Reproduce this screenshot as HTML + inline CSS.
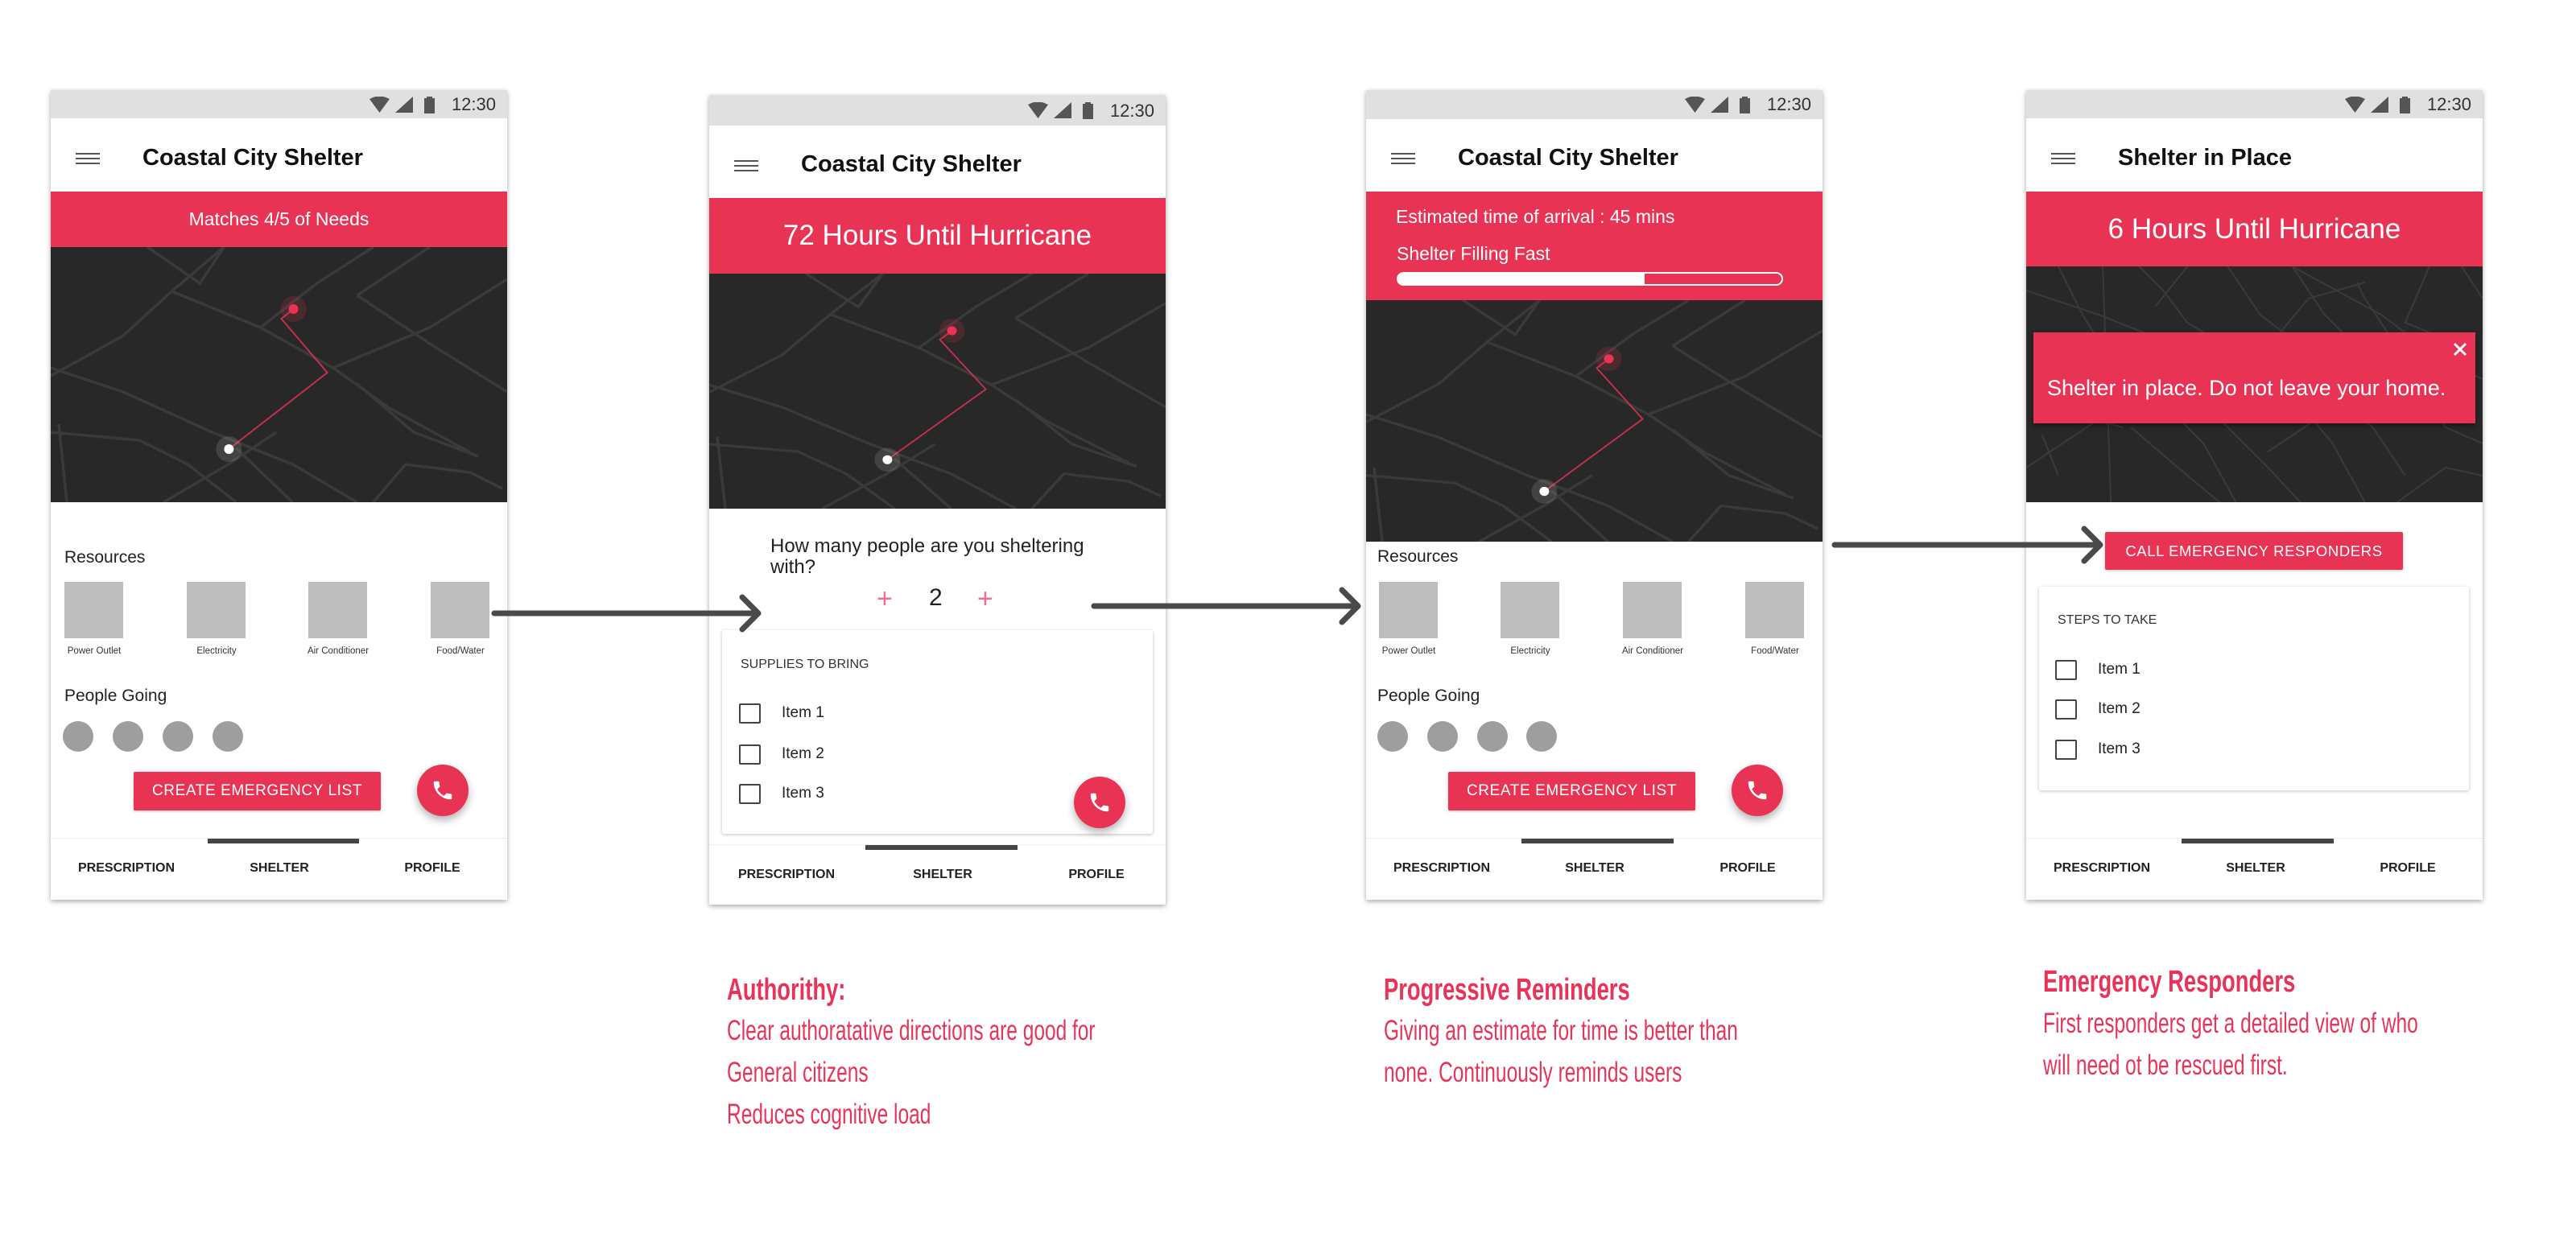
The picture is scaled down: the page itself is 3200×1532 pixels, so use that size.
<!DOCTYPE html>
<html><head><meta charset="utf-8">
<style>
*{margin:0;padding:0;box-sizing:border-box}
body{width:3200px;height:1532px;background:#fff;position:relative;overflow:hidden;font-family:"Liberation Sans",Arial,sans-serif;color:#222}
.ph{position:absolute;width:567px;height:1006px;background:#fff;box-shadow:0 2px 6px rgba(0,0,0,.35);overflow:hidden}
.ab{position:absolute}
.sb{position:absolute;left:0;top:0;width:100%;height:35px;background:#e0e0e0}
.time{position:absolute;right:14px;top:5px;font-size:22px;color:#333}
.ham{position:absolute;left:31px;width:30px;height:14px;border-top:2.5px solid #555;border-bottom:2.5px solid #555}
.ham:after{content:"";position:absolute;left:0;right:0;top:3.5px;border-top:2.5px solid #555}
.title{position:absolute;left:114px;font-size:29px;font-weight:bold;color:#111}
.red{position:absolute;left:0;width:100%;background:#e93354;color:#fff}
.map{position:absolute;left:0;width:100%;background:#282828}
.map svg{display:block;width:100%;height:100%}
.lbl{font-size:21px;color:#222}
.sq{position:absolute;width:73px;height:70px;background:#bdbdbd}
.sql{position:absolute;width:110px;text-align:center;font-size:11.5px;color:#333}
.cir{position:absolute;width:38px;height:38px;border-radius:50%;background:#9e9e9e}
.btn{position:absolute;background:#e93354;color:#fff;font-size:19px;text-align:center;letter-spacing:.6px;border-radius:2px;box-shadow:0 1px 3px rgba(0,0,0,.25)}
.fab{position:absolute;width:64px;height:64px;border-radius:50%;background:#e93354;box-shadow:0 5px 10px rgba(0,0,0,.3)}
.fab svg{position:absolute;left:17px;top:17px;width:30px;height:30px}
.nav{position:absolute;left:0;width:100%;height:80px;border-top:1px solid #eee}
.nav span{position:absolute;font-size:16px;font-weight:bold;color:#222;transform:translateX(-50%)}
.ind{position:absolute;top:0;height:6px;background:#444}
.card{position:absolute;background:#fff;box-shadow:0 1px 4px rgba(0,0,0,.25);border-radius:3px}
.cb{position:absolute;width:27px;height:25px;border:2.5px solid #444;border-radius:2px}
.it{position:absolute;font-size:19px;color:#222}
.cap{position:absolute;color:#e8345a;transform-origin:0 0;white-space:nowrap}
.h{font-size:38px;font-weight:bold;transform:scaleX(.72)}
.t{font-size:35px;transform:scaleX(.7)}
</style></head><body>

<svg width="0" height="0" style="position:absolute">
<defs>
<symbol id="mapA" viewBox="0 0 566 317" preserveAspectRatio="none">
<g stroke="#3a3a3a" stroke-width="3.5" fill="none">
<path d="M120,0 L185,45 L215,0"/><path d="M215,0 L150,55 L90,110 L0,160"/>
<path d="M0,150 L90,180 L200,230 L300,270 L380,317"/>
<path d="M150,55 L260,100 L350,150 L420,200 L520,255"/>
<path d="M260,100 L330,45 L400,0"/>
<path d="M380,60 L470,120 L566,180"/>
<path d="M350,150 L470,100 L566,40"/><path d="M470,0 L380,60"/>
<path d="M380,170 L450,230 L530,260"/>
<path d="M0,230 L110,240 L170,270 L230,317"/><path d="M10,220 L20,317"/>
<path d="M140,317 L220,270 L280,230"/><path d="M230,250 L300,317"/>
<path d="M400,317 L440,270 L520,280 L560,300"/>
</g>
<path d="M221,251 L343,156 L286,89 L301,77" stroke="#e93354" stroke-width="2" fill="none" opacity=".8"/>
<circle cx="301" cy="77" r="16" fill="#e93354" opacity=".18"/>
<circle cx="301" cy="77" r="6" fill="#e93354"/>
<circle cx="221" cy="251" r="16" fill="#fff" opacity=".12"/>
<circle cx="221" cy="251" r="6" fill="#fff"/>
</symbol>
<symbol id="mapB" viewBox="0 0 566 293" preserveAspectRatio="none">
<g stroke="#3a3a3a" stroke-width="2" fill="none">
<path d="M0,30 L90,60 L190,100"/><path d="M40,0 L70,60 L100,110"/><path d="M95,0 L105,293"/>
<path d="M140,0 L170,30 L200,70 L250,100"/><path d="M200,0 L160,50"/><path d="M250,0 L290,60 L330,90"/>
<path d="M330,0 L370,60 L420,110"/><path d="M300,100 L350,40 L420,20"/><path d="M330,0 L440,60 L520,120 L566,140"/>
<path d="M410,20 L420,40 L460,100"/><path d="M500,0 L470,70 L520,90"/><path d="M540,0 L566,40"/>
<path d="M0,250 L60,210 L120,170"/><path d="M20,210 L40,260"/><path d="M130,200 L200,260 L240,293"/>
<path d="M160,160 L220,220 L260,293"/><path d="M240,190 L300,250 L340,293"/><path d="M300,230 L360,190"/>
<path d="M330,160 L380,220 L420,293"/><path d="M380,160 L430,200 L470,260"/><path d="M430,180 L480,140 L520,200 L566,220"/>
<path d="M460,293 L520,250 L566,260"/><path d="M80,190 L120,200"/></g>
</symbol>
<symbol id="phone" viewBox="0 0 24 24"><path fill="#fff" d="M6.62 10.790c1.44 2.83 3.76 5.14 6.59 6.59l2.2-2.2c.27-.27.67-.36 1.020-.24 1.12.37 2.33.57 3.570.57.55 0 1 .45 1 1V20c0 .55-.45 1-1 1-9.39 0-17-7.61-17-17 0-.55.45-1 1-1h3.5c.55 0 1 .45 1 1 0 1.25.2 2.45.57 3.57.11.35.03.74-.25 1.02l-2.2 2.2z"/></symbol>
<symbol id="stat" viewBox="0 0 90 22"><path d="M0,3 Q12,-4 25,3 L12.5,20 Z" fill="#555"/><path d="M32,20 L54,0 L54,20 Z" fill="#555"/><rect x="68" y="2" width="13" height="19" fill="#555"/><rect x="71" y="0" width="7" height="3" fill="#555"/></symbol>
</defs></svg>

<!-- PHONE 1 -->
<div class="ph" style="left:63px;top:112px">
 <div class="sb"><svg class="ab" style="right:81px;top:8px;width:90px;height:22px"><use href="#stat"/></svg><div class="time">12:30</div></div>
 <div class="ham" style="top:78px"></div>
 <div class="title" style="top:68px">Coastal City Shelter</div>
 <div class="red" style="top:126px;height:69px;font-size:23px;text-align:center;line-height:69px">Matches 4/5 of Needs</div>
 <div class="map" style="top:195px;height:317px"><svg><use href="#mapA"/></svg></div>
 <div class="ab lbl" style="left:17px;top:569px">Resources</div>
 <div class="sq" style="left:17px;top:611px"></div><div class="sq" style="left:169px;top:611px"></div><div class="sq" style="left:320px;top:611px"></div><div class="sq" style="left:472px;top:611px"></div>
 <div class="sql" style="left:-1px;top:691px">Power Outlet</div><div class="sql" style="left:151px;top:691px">Electricity</div><div class="sql" style="left:302px;top:691px">Air Conditioner</div><div class="sql" style="left:454px;top:691px">Food/Water</div>
 <div class="ab lbl" style="left:17px;top:741px">People Going</div>
 <div class="cir" style="left:15px;top:784px"></div><div class="cir" style="left:77px;top:784px"></div><div class="cir" style="left:139px;top:784px"></div><div class="cir" style="left:201px;top:784px"></div>
 <div class="btn" style="left:103px;top:847px;width:307px;height:48px;line-height:48px">CREATE EMERGENCY LIST</div>
 <div class="fab" style="left:455px;top:838px"><svg><use href="#phone"/></svg></div>
 <div class="nav" style="top:929px"><div class="ind" style="left:195px;width:188px"></div><span style="left:94px;top:28px">PRESCRIPTION</span><span style="left:284px;top:28px">SHELTER</span><span style="left:474px;top:28px">PROFILE</span></div>
</div>

<!-- PHONE 2 -->
<div class="ph" style="left:881px;top:118px">
 <div class="sb" style="height:38px"><svg class="ab" style="right:81px;top:9px;width:90px;height:22px"><use href="#stat"/></svg><div class="time" style="top:7px">12:30</div></div>
 <div class="ham" style="top:81px"></div>
 <div class="title" style="top:70px">Coastal City Shelter</div>
 <div class="red" style="top:128px;height:94px;font-size:35px;text-align:center;line-height:94px">72 Hours Until Hurricane</div>
 <div class="map" style="top:222px;height:292px"><svg><use href="#mapA"/></svg></div>
 <div class="ab" style="left:76px;top:548px;font-size:24px;line-height:26px;color:#222">How many people are you sheltering<br>with?</div>
 <div class="ab" style="left:208px;top:607px;font-size:34px;color:#f0708e;font-weight:300">+</div>
 <div class="ab" style="left:273px;top:608px;font-size:30px;color:#222">2</div>
 <div class="ab" style="left:333px;top:607px;font-size:34px;color:#f0708e">+</div>
 <div class="card" style="left:16px;top:665px;width:535px;height:253px">
  <div class="ab" style="left:23px;top:34px;font-size:16px;color:#333">SUPPLIES TO BRING</div>
  <div class="cb" style="left:21px;top:91px"></div><div class="it" style="left:74px;top:92px">Item 1</div>
  <div class="cb" style="left:21px;top:142px"></div><div class="it" style="left:74px;top:143px">Item 2</div>
  <div class="cb" style="left:21px;top:191px"></div><div class="it" style="left:74px;top:192px">Item 3</div>
 </div>
 <div class="fab" style="left:453px;top:847px"><svg><use href="#phone"/></svg></div>
 <div class="nav" style="top:931px"><div class="ind" style="left:194px;width:189px"></div><span style="left:96px;top:28px">PRESCRIPTION</span><span style="left:290px;top:28px">SHELTER</span><span style="left:481px;top:28px">PROFILE</span></div>
</div>

<!-- PHONE 3 -->
<div class="ph" style="left:1697px;top:112px">
 <div class="sb" style="height:36px"><svg class="ab" style="right:81px;top:8px;width:90px;height:22px"><use href="#stat"/></svg><div class="time">12:30</div></div>
 <div class="ham" style="top:78px"></div>
 <div class="title" style="top:68px">Coastal City Shelter</div>
 <div class="red" style="top:126px;height:135px">
  <div class="ab" style="left:37px;top:18px;font-size:23px">Estimated time of arrival : 45 mins</div>
  <div class="ab" style="left:38px;top:64px;font-size:23px">Shelter Filling Fast</div>
  <div class="ab" style="left:38px;top:100px;width:480px;height:17px;border:2.5px solid #fff;border-radius:9px;overflow:hidden"><div style="width:306px;height:100%;background:#fff"></div></div>
 </div>
 <div class="map" style="top:261px;height:300px"><svg><use href="#mapA"/></svg></div>
 <div class="ab lbl" style="left:14px;top:568px">Resources</div>
 <div class="sq" style="left:16px;top:611px"></div><div class="sq" style="left:167px;top:611px"></div><div class="sq" style="left:319px;top:611px"></div><div class="sq" style="left:471px;top:611px"></div>
 <div class="sql" style="left:-2px;top:691px">Power Outlet</div><div class="sql" style="left:149px;top:691px">Electricity</div><div class="sql" style="left:301px;top:691px">Air Conditioner</div><div class="sql" style="left:453px;top:691px">Food/Water</div>
 <div class="ab lbl" style="left:14px;top:741px">People Going</div>
 <div class="cir" style="left:14px;top:784px"></div><div class="cir" style="left:76px;top:784px"></div><div class="cir" style="left:138px;top:784px"></div><div class="cir" style="left:199px;top:784px"></div>
 <div class="btn" style="left:102px;top:847px;width:307px;height:48px;line-height:48px">CREATE EMERGENCY LIST</div>
 <div class="fab" style="left:454px;top:838px"><svg><use href="#phone"/></svg></div>
 <div class="nav" style="top:929px"><div class="ind" style="left:193px;width:189px"></div><span style="left:94px;top:28px">PRESCRIPTION</span><span style="left:284px;top:28px">SHELTER</span><span style="left:474px;top:28px">PROFILE</span></div>
</div>

<!-- PHONE 4 -->
<div class="ph" style="left:2517px;top:112px">
 <div class="sb"><svg class="ab" style="right:81px;top:8px;width:90px;height:22px"><use href="#stat"/></svg><div class="time">12:30</div></div>
 <div class="ham" style="top:78px"></div>
 <div class="title" style="top:68px">Shelter in Place</div>
 <div class="red" style="top:126px;height:93px;font-size:35px;text-align:center;line-height:93px">6 Hours Until Hurricane</div>
 <div class="map" style="top:219px;height:293px"><svg><use href="#mapB"/></svg></div>
 <div class="ab" style="left:9px;top:301px;width:549px;height:113px;background:#e93354;box-shadow:0 3px 6px rgba(0,0,0,.4)">
  <div class="ab" style="left:17px;top:54px;font-size:27px;color:#fff;white-space:nowrap">Shelter in place. Do not leave your home.</div>
  <svg class="ab" style="right:10px;top:12px;width:18px;height:18px" viewBox="0 0 18 18"><path d="M2,2 L16,16 M16,2 L2,16" stroke="#fff" stroke-width="3"/></svg>
 </div>
 <div class="btn" style="left:98px;top:549px;width:370px;height:47px;line-height:47px;font-size:18.5px">CALL EMERGENCY RESPONDERS</div>
 <div class="card" style="left:16px;top:617px;width:534px;height:253px">
  <div class="ab" style="left:23px;top:33px;font-size:16px;color:#333">STEPS TO TAKE</div>
  <div class="cb" style="left:20px;top:91px"></div><div class="it" style="left:73px;top:92px">Item 1</div>
  <div class="cb" style="left:20px;top:140px"></div><div class="it" style="left:73px;top:141px">Item 2</div>
  <div class="cb" style="left:20px;top:190px"></div><div class="it" style="left:73px;top:191px">Item 3</div>
 </div>
 <div class="nav" style="top:929px"><div class="ind" style="left:193px;width:189px"></div><span style="left:94px;top:28px">PRESCRIPTION</span><span style="left:285px;top:28px">SHELTER</span><span style="left:474px;top:28px">PROFILE</span></div>
</div>

<!-- ARROWS -->
<svg class="ab" style="left:0;top:0;width:3200px;height:1532px;pointer-events:none" viewBox="0 0 3200 1532">
<g stroke="#4a4a4a" stroke-width="7" fill="none" stroke-linecap="round" stroke-linejoin="round">
<path d="M614,762 L940,762 M922,742 L942,762 L922,782"/>
<path d="M1359,753 L1685,753 M1667,733 L1687,753 L1667,773"/>
<path d="M2279,677 L2607,677 M2589,657 L2609,677 L2589,697"/>
</g></svg>

<!-- CAPTIONS -->
<div class="cap h" style="left:903px;top:1209px">Authorithy:</div>
<div class="cap t" style="left:903px;top:1261px">Clear authoratative directions are good for</div>
<div class="cap t" style="left:903px;top:1313px">General citizens</div>
<div class="cap t" style="left:903px;top:1365px">Reduces cognitive load</div>

<div class="cap h" style="left:1719px;top:1209px">Progressive Reminders</div>
<div class="cap t" style="left:1719px;top:1261px">Giving an estimate for time is better than</div>
<div class="cap t" style="left:1719px;top:1313px">none. Continuously reminds users</div>

<div class="cap h" style="left:2538px;top:1199px">Emergency Responders</div>
<div class="cap t" style="left:2538px;top:1252px">First responders get a detailed view of who</div>
<div class="cap t" style="left:2538px;top:1304px">will need ot be rescued first.</div>
</body></html>
